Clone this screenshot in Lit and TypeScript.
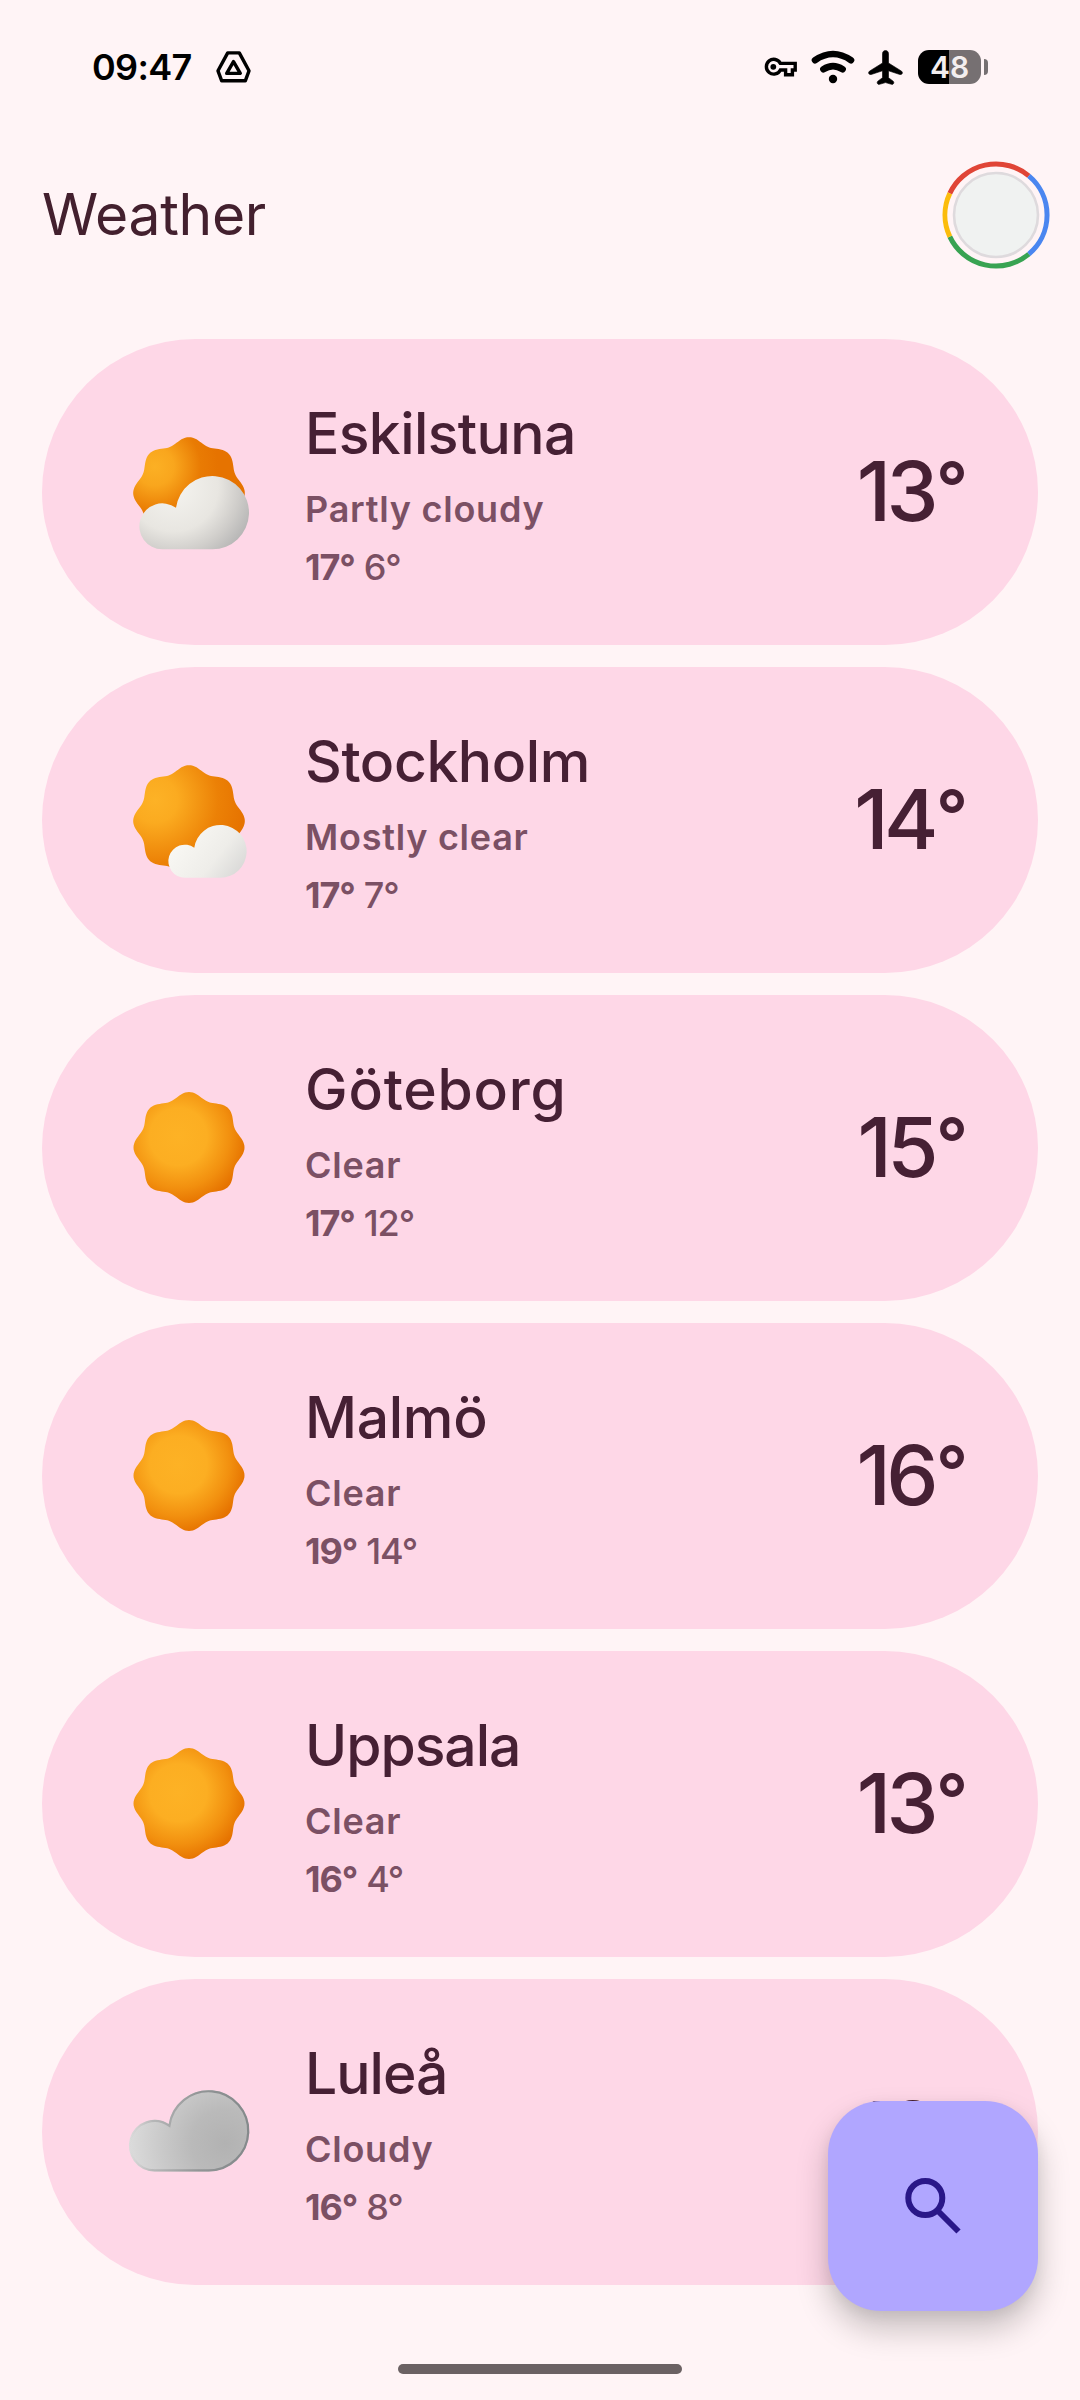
import { LitElement, html, svg, css } from "lit";
import { customElement, property } from "lit/decorators.js";
import { styleMap } from "lit/directives/style-map.js";

type Sky = "partly" | "mostly" | "clear" | "cloudy";

interface Place {
  name: string;
  tracking: number;
  condition: string;
  sky: Sky;
  high: number;
  low: number;
  now: number;
}

const PLACES: Place[] = [
  { name: "Eskilstuna", tracking: -0.6, condition: "Partly cloudy", sky: "partly", high: 17, low: 6, now: 13 },
  { name: "Stockholm", tracking: -0.4, condition: "Mostly clear", sky: "mostly", high: 17, low: 7, now: 14 },
  { name: "Göteborg", tracking: 0.8, condition: "Clear", sky: "clear", high: 17, low: 12, now: 15 },
  { name: "Malmö", tracking: -0.3, condition: "Clear", sky: "clear", high: 19, low: 14, now: 16 },
  { name: "Uppsala", tracking: -1, condition: "Clear", sky: "clear", high: 16, low: 4, now: 13 },
  { name: "Luleå", tracking: -1, condition: "Cloudy", sky: "cloudy", high: 16, low: 8, now: 13 },
];

/** Eight-lobed scalloped disc. */
function scallop(cx: number, cy: number, mean: number, wave: number): string {
  const pts: string[] = [];
  for (let i = 0; i < 180; i++) {
    const a = (i / 180) * Math.PI * 2;
    const r = mean + wave * Math.cos(8 * a);
    pts.push(`${(cx + r * Math.sin(a)).toFixed(1)} ${(cy - r * Math.cos(a)).toFixed(1)}`);
  }
  return `M${pts.join("L")}Z`;
}

/** Cloud from a small left puff and a large right puff standing on one base line. */
function cloud(x1: number, r1: number, x2: number, r2: number, base: number): string {
  const y1 = base - r1;
  const y2 = base - r2;
  const dx = x2 - x1;
  const dy = y2 - y1;
  const d = Math.hypot(dx, dy);
  const along = (r1 * r1 - r2 * r2 + d * d) / (2 * d);
  const h = Math.sqrt(r1 * r1 - along * along);
  const jx = x1 + (along * dx) / d + (h * dy) / d;
  const jy = y1 + (along * dy) / d - (h * dx) / d;
  return `M${x1} ${base}A${r1} ${r1} 0 1 1 ${jx.toFixed(2)} ${jy.toFixed(2)}A${r2} ${r2} 0 1 1 ${x2} ${base}Z`;
}

@customElement("sky-icon")
export class SkyIcon extends LitElement {
  @property() sky: Sky = "clear";

  static styles = css`
    :host { display: block; width: 160px; height: 160px; }
    svg { display: block; width: 160px; height: 160px; }
  `;

  render() {
    const defs = svg`<defs>
      <radialGradient id="sunFull" gradientUnits="userSpaceOnUse" cx="205" cy="200" r="205">
        <stop offset="0" stop-color="#fdb225"/><stop offset=".42" stop-color="#fcae22"/>
        <stop offset=".75" stop-color="#f2900f"/><stop offset="1" stop-color="#e67300"/>
      </radialGradient>
      <radialGradient id="sunPart" gradientUnits="userSpaceOnUse" cx="135" cy="170" r="190">
        <stop offset="0" stop-color="#fcb024"/><stop offset=".3" stop-color="#f9a61d"/>
        <stop offset=".72" stop-color="#e97b03"/><stop offset="1" stop-color="#e67300"/>
      </radialGradient>
      <radialGradient id="sunMost" gradientUnits="userSpaceOnUse" cx="135" cy="180" r="270">
        <stop offset="0" stop-color="#fdb226"/><stop offset=".25" stop-color="#fbab20"/>
        <stop offset=".7" stop-color="#ec8106"/><stop offset="1" stop-color="#e67300"/>
      </radialGradient>
      <radialGradient id="white" gradientUnits="userSpaceOnUse" cx="190" cy="230" r="300">
        <stop offset="0" stop-color="#f5f4f0"/><stop offset=".45" stop-color="#e8e6e1"/>
        <stop offset=".66" stop-color="#cfcdca"/><stop offset="1" stop-color="#a0a1a3"/>
      </radialGradient>
      <linearGradient id="white2" gradientUnits="userSpaceOnUse" x1="220" y1="290" x2="390" y2="420">
        <stop offset="0" stop-color="#f8f7f3"/><stop offset=".55" stop-color="#eeede9"/>
        <stop offset="1" stop-color="#d6d6d5"/>
      </linearGradient>
      <radialGradient id="grey" gradientUnits="userSpaceOnUse" cx="345" cy="250" r="290">
        <stop offset="0" stop-color="#b2b2b2"/><stop offset=".35" stop-color="#bababa"/>
        <stop offset=".65" stop-color="#c9c9c9"/><stop offset="1" stop-color="#dcdcdc"/>
      </radialGradient>
      <linearGradient id="rim" gradientUnits="userSpaceOnUse" x1="60" y1="230" x2="400" y2="230">
        <stop offset="0" stop-color="#b5b5b5" stop-opacity="0"/><stop offset=".2" stop-color="#a5a7a8" stop-opacity=".6"/>
        <stop offset=".6" stop-color="#929596"/><stop offset="1" stop-color="#858a8c"/>
      </linearGradient>
    </defs>`;
    let art;
    if (this.sky === "partly") {
      art = svg`<g transform="translate(0 -6)">
        <path d=${scallop(237, 249, 158.5, 9)} fill="url(#sunPart)"/>
        <path d=${cloud(157, 69, 307, 110, 418)} fill="url(#white)"/></g>`;
    } else if (this.sky === "mostly") {
      art = svg`<path d=${scallop(237, 243, 158.5, 9)} fill="url(#sunMost)"/>
        <path d=${cloud(224.5, 49.5, 331, 79, 413)} fill="url(#white2)"/>`;
    } else if (this.sky === "clear") {
      art = svg`<g transform="translate(0 6)">
        <path d=${scallop(237, 232.5, 157.5, 9)} fill="url(#sunFull)"/></g>`;
    } else {
      art = svg`<g transform="translate(0 24)">
        <path d=${cloud(134, 77.5, 296, 122, 334.5)} fill="url(#grey)"/>
        <path d=${cloud(134, 74.2, 296, 118.7, 331.2)} fill="none" stroke="url(#rim)" stroke-width="6.6"/></g>`;
    }
    return html`<svg viewBox="0 0 480 480" aria-hidden="true">${defs}${art}</svg>`;
  }
}

@customElement("place-card")
export class PlaceCard extends LitElement {
  @property({ attribute: false }) place!: Place;

  static styles = css`
    :host { display: block; }
    .card {
      box-sizing: border-box;
      height: 306px;
      border-radius: 153px;
      background: #fed7e7;
      display: flex;
      align-items: center;
      padding: 0 70px 0 68px;
      color: #462034;
    }
    .info { flex: 1; align-self: flex-start; padding: 60px 0 0 35px; }
    .name { font-size: 57px; line-height: 70px; font-weight: 500; }
    .cond { margin-top: 12px; font-size: 36px; line-height: 57px; font-weight: 600; color: #7b5064; letter-spacing: 0.75px; }
    .range { font-size: 36px; line-height: 58px; color: #7b5064; letter-spacing: -1.1px; }
    .high { font-weight: 700; }
    .low { font-weight: 500; }
    .now { font-size: 83px; line-height: 100px; font-weight: 500; letter-spacing: -4.6px; padding-bottom: 2px; white-space: nowrap; }
    .ring { font-size: 70px; line-height: 0; font-weight: 600; letter-spacing: 0; vertical-align: 9px; margin-left: 2px; }
  `;

  render() {
    const p = this.place;
    return html`<div class="card">
      <sky-icon .sky=${p.sky}></sky-icon>
      <div class="info">
        <div class="name" style=${styleMap({ letterSpacing: `${p.tracking}px` })}>${p.name}</div>
        <div class="cond">${p.condition}</div>
        <div class="range"><span class="high">${p.high}°</span> <span class="low">${p.low}°</span></div>
      </div>
      <div class="now">${p.now}<span class="ring">°</span></div>
    </div>`;
  }
}

@customElement("status-bar")
export class StatusBar extends LitElement {
  static styles = css`
    :host { display: block; }
    .bar { display: flex; align-items: center; height: 134px; padding: 0 92px 0 92px; color: #000; }
    .time { font-size: 36px; font-weight: 600; line-height: 44px; width: 124px; letter-spacing: -0.7px; }
    .gap { flex: 1; }
    svg { display: block; }
    .key { margin-right: 14px; }
    .wifi { margin-right: 13px; }
    .plane { margin-right: 15px; }
    .battery {
      width: 63px; height: 34px; border-radius: 11px;
      background: linear-gradient(90deg, #000 50%, #767072 50%);
      color: #f3eeef; font-size: 30px; font-weight: 600; line-height: 34px; text-align: center;
    }
    .nub { width: 4px; height: 16px; margin-left: 3px; border-radius: 0 4px 4px 0; background: #767072; }
  `;

  render() {
    return html`<div class="bar">
      <div class="time">09:47</div>
      <svg width="35" height="32" viewBox="0 0 35 32" fill="none" stroke="#000" stroke-width="3.4" stroke-linejoin="round">
        <path d="M11.7 1.9H23.3L33 19.8L29.3 29.8H5.7L2 19.8Z"/>
        <path d="M17.5 10.6L24.3 22.4H10.7Z"/>
      </svg>
      <div class="gap"></div>
      <svg class="key" width="33" height="20" viewBox="0 0 33 20" fill="none" stroke="#000" stroke-width="3.4">
        <path d="M16.4 6.4H31.2V13H28.4V17.7H21.6V13H16.4A7.4 7.4 0 1 1 16.4 6.4Z"/>
        <circle cx="9.3" cy="9.8" r="2.9" fill="#000" stroke="none"/>
      </svg>
      <svg class="wifi" width="44" height="34" viewBox="0 0 44 34" fill="none" stroke="#000" stroke-width="6.6" stroke-linecap="round">
        <path d="M4 10.2Q22 -2.2 40 10.2"/>
        <path d="M12.4 19.3Q22 13 31.6 19.3"/>
        <circle cx="22" cy="29" r="4.2" fill="#000" stroke="none"/>
      </svg>
      <svg class="plane" width="35" height="35" viewBox="0 0 35 35">
        <path d="M17.5 .5C19.4 .5 20.5 1.9 20.5 3.6V13L33.6 21.2Q34.6 22 34.4 23.2Q33.7 25 31.8 24.5L20.5 20.8V27.7L25.2 31.2Q26.2 32.3 25.6 33.5Q24.9 34.7 23.4 34.3L17.5 32.6L11.6 34.3Q10.1 34.7 9.4 33.5Q8.8 32.3 9.8 31.2L14.5 27.7V20.8L3.2 24.5Q1.3 25 .6 23.2Q.4 22 1.4 21.2L14.5 13V3.6C14.5 1.9 15.6 .5 17.5 .5Z" stroke="#000" stroke-width=".6"/>
      </svg>
      <div class="battery">48</div>
      <div class="nub"></div>
    </div>`;
  }
}

@customElement("app-root")
export class AppRoot extends LitElement {
  static styles = css`
    :host { display: block; }
    .screen {
      position: relative;
      width: 1080px;
      height: 2400px;
      overflow: hidden;
      background: #fff4f6;
      font-family: Inter, Roboto, "Liberation Sans", sans-serif;
      display: flex;
      flex-direction: column;
    }
    .head {
      display: flex;
      align-items: center;
      justify-content: space-between;
      height: 162px;
      padding: 0 30px 0 42px;
    }
    .title { margin: 0; font-size: 57px; line-height: 70px; font-weight: 400; letter-spacing: -0.3px; color: #43202e; }
    .avatar { display: block; }
    .list { display: flex; flex-direction: column; gap: 22px; padding: 43px 42px 0; }
    .home { width: 284px; height: 10px; border-radius: 5px; background: #6b6163; margin: 79px auto 0; }
    .fab {
      position: absolute;
      left: 828px;
      top: 2101px;
      width: 210px;
      height: 210px;
      border: 0;
      padding: 0;
      border-radius: 53px;
      background: #b0a6ff;
      box-shadow: 0 18px 32px rgba(0, 0, 0, 0.22), 0 4px 14px rgba(0, 0, 0, 0.06);
    }
    .fab svg { display: block; }
  `;

  render() {
    return html`<div class="screen">
      <status-bar></status-bar>
      <header class="head">
        <h1 class="title">Weather</h1>
        <svg class="avatar" width="108" height="108" viewBox="-54 -54 108 108" fill="none" stroke-width="5">
          <path d="M-46.2 -21.6A51 51 0 0 1 32.8 -39.1" stroke="#e04537"/>
          <path d="M32.8 -39.1A51 51 0 0 1 32.8 39.1" stroke="#4a86f0"/>
          <path d="M32.8 39.1A51 51 0 0 1 -46.2 21.6" stroke="#38a352"/>
          <path d="M-46.2 21.6A51 51 0 0 1 -46.2 -21.6" stroke="#fbbc0b"/>
          <circle r="42" fill="#f0f2f1" stroke="#dedadd" stroke-width="2.6"/>
        </svg>
      </header>
      <main class="list">${PLACES.map((p) => html`<place-card .place=${p}></place-card>`)}</main>
      <div class="home"></div>
      <button class="fab" aria-label="Search">
        <svg width="210" height="210" viewBox="0 0 210 210" fill="none" stroke="#291788" stroke-width="6">
          <circle cx="97.3" cy="97" r="17"/>
          <path d="M109 109L130.5 130.5"/>
        </svg>
      </button>
    </div>`;
  }
}
